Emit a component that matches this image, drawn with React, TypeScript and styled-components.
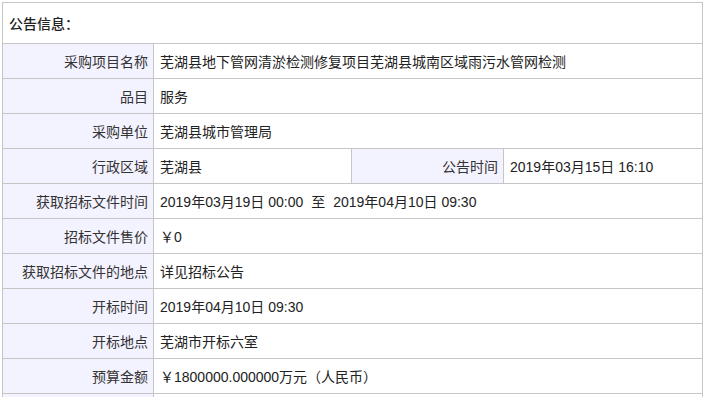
import React from 'react';
import styled, { createGlobalStyle } from 'styled-components';

const GlobalStyle = createGlobalStyle`
    html, body {
        margin: 0;
        padding: 0;
        overflow: hidden;
        background: #ffffff;
    }
    body {
        font-family: "Liberation Sans", "Noto Sans CJK SC", sans-serif;
    }
`

const Wrapper = styled.div`
    padding: 2px 0 0 2px;
`

const InfoTable = styled.table`
    width: 701px;
    border-collapse: collapse;
    table-layout: fixed;
    font-size: 14px;
    color: #333333;
`

const HeaderCell = styled.th`
    height: 40px;
    padding: 0 6px;
    text-align: left;
    font-weight: 500;
    color: #222222;
    border: 1px solid #c6c6c6;
`

const Label = styled.td`
    height: 34px;
    padding: 0 5px 0 0;
    text-align: right;
    background-color: #f3f2ff;
    border: 1px solid #c6c6c6;
    white-space: nowrap;
`

const Value = styled.td`
    height: 34px;
    padding: 0 6px;
    text-align: left;
    background-color: #ffffff;
    border: 1px solid #c6c6c6;
    white-space: nowrap;
    color: #222222;
`

const Gap = styled.span`
    margin: 0 8px;
`

type Row = { label: string; value: React.ReactNode }

const rowsTop: Row[] = [
    { label: '采购项目名称', value: '芜湖县地下管网清淤检测修复项目芜湖县城南区域雨污水管网检测' },
    { label: '品目', value: '服务' },
    { label: '采购单位', value: '芜湖县城市管理局' },
]

const rowsBottom: Row[] = [
    {
        label: '获取招标文件时间',
        value: <>2019年03月19日 00:00<Gap>至</Gap>2019年04月10日 09:30</>,
    },
    { label: '招标文件售价', value: '￥0' },
    { label: '获取招标文件的地点', value: '详见招标公告' },
    { label: '开标时间', value: '2019年04月10日 09:30' },
    { label: '开标地点', value: '芜湖市开标六室' },
    { label: '预算金额', value: '￥1800000.000000万元（人民币）' },
]

function App() {
    return (
        <Wrapper>
            <GlobalStyle />
            <InfoTable>
                <colgroup>
                    <col style={{ width: 151 }} />
                    <col style={{ width: 198 }} />
                    <col style={{ width: 152 }} />
                    <col />
                </colgroup>
                <tbody>
                    <tr>
                        <HeaderCell colSpan={4}>公告信息：</HeaderCell>
                    </tr>
                    {rowsTop.map((r) => (
                        <tr key={r.label}>
                            <Label>{r.label}</Label>
                            <Value colSpan={3}>{r.value}</Value>
                        </tr>
                    ))}
                    <tr>
                        <Label>行政区域</Label>
                        <Value>芜湖县</Value>
                        <Label>公告时间</Label>
                        <Value>2019年03月15日 16:10</Value>
                    </tr>
                    {rowsBottom.map((r) => (
                        <tr key={r.label}>
                            <Label>{r.label}</Label>
                            <Value colSpan={3}>{r.value}</Value>
                        </tr>
                    ))}
                    <tr>
                        <Label />
                        <Value colSpan={3} />
                    </tr>
                </tbody>
            </InfoTable>
        </Wrapper>
    )
}

export default App;
